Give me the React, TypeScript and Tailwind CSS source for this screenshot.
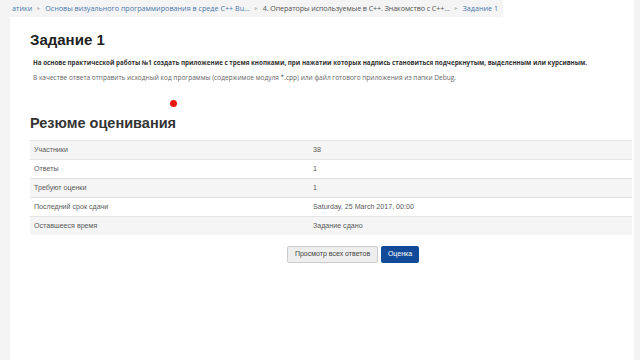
import { ReactNode } from "react";

const rows: [string, string][] = [
  ["Участники", "38"],
  ["Ответы", "1"],
  ["Требуют оценки", "1"],
  ["Последний срок сдачи", "Saturday, 25 March 2017, 00:00"],
  ["Оставшееся время", "Задание сдано"],
];

const Sep = () => <span className="mx-[4px] text-[5px] text-[#bbb]">►</span>;

const Crumb = ({ children, link }: { children: ReactNode; link?: boolean }) => (
  <span className={link ? "text-[#4a78ad]" : "text-[#555]"}>{children}</span>
);

export default function App() {
  return (
    <div className="flex h-[360px] w-[640px] overflow-hidden bg-[#f4f4f4] font-['Liberation_Sans',sans-serif]">
      <div className="w-[10px] shrink-0" />
      <div className="flex w-[624px] shrink-0 flex-col bg-white">
        {/* breadcrumb */}
        <div className="-ml-[10px] flex h-[17px] w-[503px] items-center overflow-hidden whitespace-nowrap bg-[#f4f4f4] pl-[12px] font-['Open_Sans',sans-serif] text-[7.2px] leading-none">
          <Crumb link>атики</Crumb>
          <Sep />
          <Crumb link>Основы визуального программирования в среде C++ Bu...</Crumb>
          <Sep />
          <span className="tracking-[-0.1px] text-[#555]">4. Операторы используемые в C++. Знакомство с C++...</span>
          <Sep />
          <Crumb link>Задание 1</Crumb>
        </div>

        <div className="flex flex-col pl-[20px] pr-[2px]">
          <h2 className="mt-[13px] text-[15px] font-bold leading-[20px] text-[#222]">Задание 1</h2>
          <p className="mt-[8px] pl-[3px] font-['Open_Sans',sans-serif] text-[6.25px] font-bold leading-[9px] text-[#333]">
            На основе практической работы №1 создать приложение с тремя кнопками, при нажатии которых надпись становиться подчеркнутым, выделенным или курсивным.
          </p>
          <p className="mt-[6px] pl-[3px] font-['Open_Sans',sans-serif] text-[6.55px] leading-[9px] text-[#666]">
            В качестве ответа отправить исходный код программы (содержимое модуля *.cpp) или файл готового приложения из папки Debug.
          </p>
          <div className="relative h-[33px]">
            <span className="absolute left-[140px] top-[18px] h-[7px] w-[7px] rounded-full bg-[#e8190f]" />
          </div>
          <h3 className="text-[14.5px] font-bold leading-[16px] text-[#333]">Резюме оценивания</h3>

          <div className="mt-[9px] flex flex-col text-[7.1px] text-[#5a5a5a]">
            {rows.map(([k, v], i) => (
              <div
                key={k}
                className={`flex h-[19px] items-center border-t border-[#e4e4e4] ${i % 2 === 0 ? "bg-[#f5f5f5]" : "bg-white"}`}
              >
                <div className="w-[283px] pl-[4px]">{k}</div>
                <div>{v}</div>
              </div>
            ))}
          </div>

          <div className="ml-[257px] mt-[11px] flex gap-[3px] text-[7px]">
            <button className="h-[17px] w-[91px] rounded-[2px] border border-[#ccc] bg-[#eee] text-[#444]">
              Просмотр всех ответов
            </button>
            <button className="h-[17px] w-[38px] rounded-[2px] bg-[#124a9a] text-white">Оценка</button>
          </div>
        </div>
      </div>
      <div className="flex-1" />
    </div>
  );
}
